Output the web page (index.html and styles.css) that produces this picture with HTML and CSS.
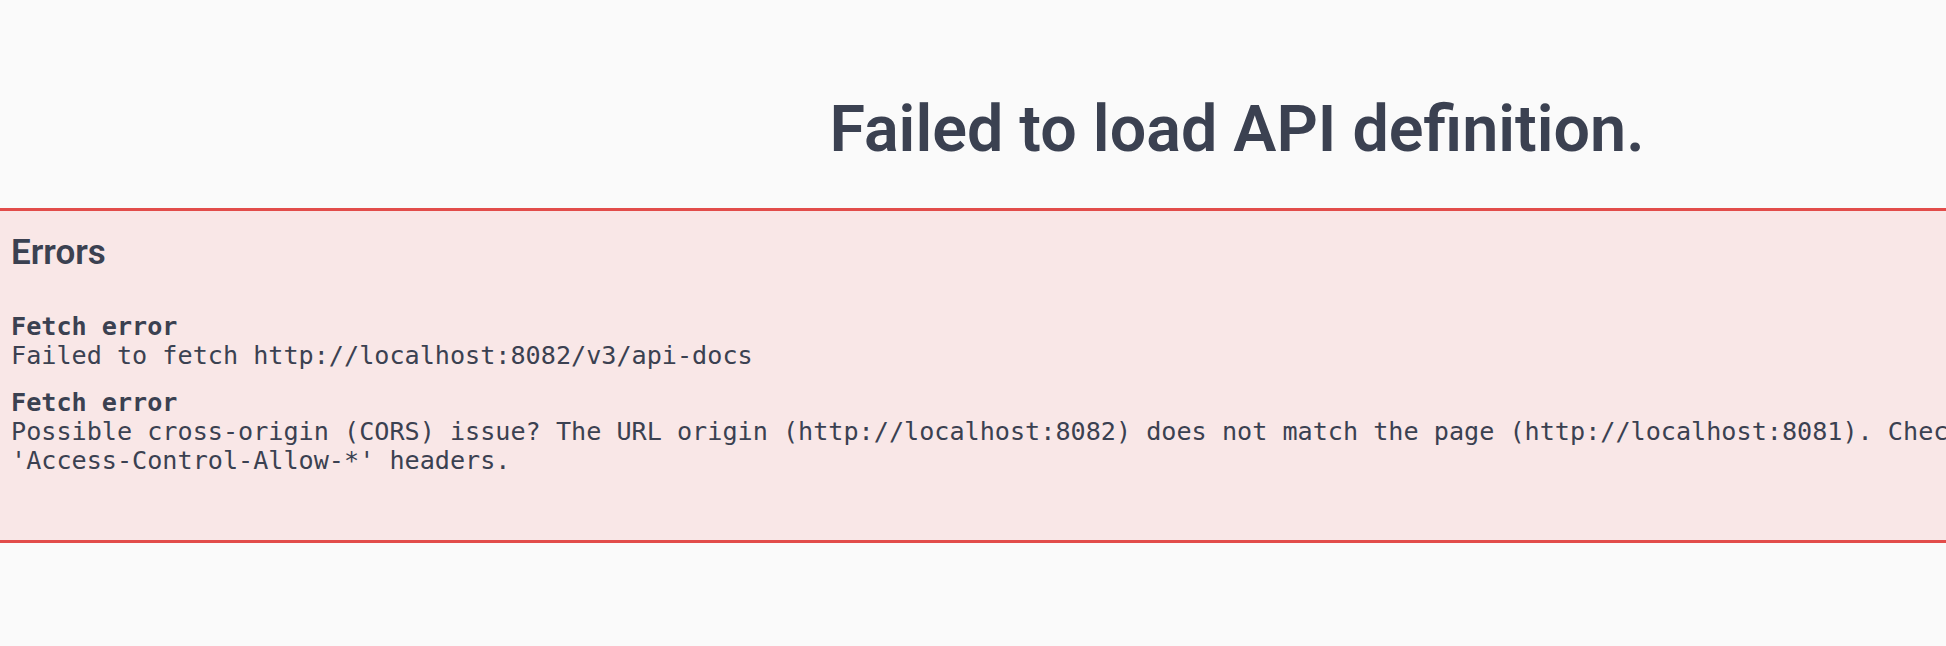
FILE: index.html
```html
<!DOCTYPE html>
<html lang="en">
<head>
<meta charset="utf-8">
<title>Swagger UI</title>
<link rel="stylesheet" href="styles.css">
</head>
<body>
<div class="swagger-ui">
  <div class="loading-container">
    <h4 class="title">Failed to load API definition.</h4>
  </div>
  <div class="errors-wrapper">
    <hgroup class="error-head">
      <h4 class="errors-title">Errors</h4>
    </hgroup>
    <div class="errors">
      <div class="error-wrapper">
        <b class="error-label">Fetch error</b>
        <span class="message">Failed to fetch http://localhost:8082/v3/api-docs</span>
      </div>
      <div class="error-wrapper">
        <b class="error-label">Fetch error</b>
        <span class="message">Possible cross-origin (CORS) issue? The URL origin (http://localhost:8082) does not match the page (http://localhost:8081). Check the server returns the correct 'Access-Control-Allow-*' headers.</span>
      </div>
    </div>
  </div>
</div>
</body>
</html>
```
FILE: styles.css
```css
html, body {
  margin: 0;
  padding: 0;
  overflow: hidden;
  background: #fafafa;
}

.swagger-ui {
  width: 2474px;
  color: #3b4151;
}

.loading-container {
  display: flex;
  flex-direction: column;
  align-items: center;
  padding: 91px 0 41px;
}

.title {
  margin: 0;
  font-family: Roboto, "Open Sans", sans-serif;
  font-weight: 600;
  font-size: 64.6px;
  line-height: normal;
  color: #3b4151;
}

.errors-wrapper {
  background: #f9e7e7;
  border-top: 3px solid #e24c4a;
  border-bottom: 3px solid #e24c4a;
  padding: 21px 11px 65px;
}

.error-head {
  margin: 0 0 39px;
}

.errors-title {
  margin: 0;
  font-family: Roboto, "Open Sans", sans-serif;
  font-weight: 600;
  font-size: 35px;
  line-height: normal;
  color: #3b4151;
}

.errors {
  display: flex;
  flex-direction: column;
  gap: 18px;
  font-family: "DejaVu Sans Mono", monospace;
  font-size: 25.15px;
  line-height: 29px;
  color: #3b4151;
}

.error-wrapper {
  display: flex;
  flex-direction: column;
}

.error-label {
  font-weight: bold;
}

.message {
  white-space: pre-line;
}
```
